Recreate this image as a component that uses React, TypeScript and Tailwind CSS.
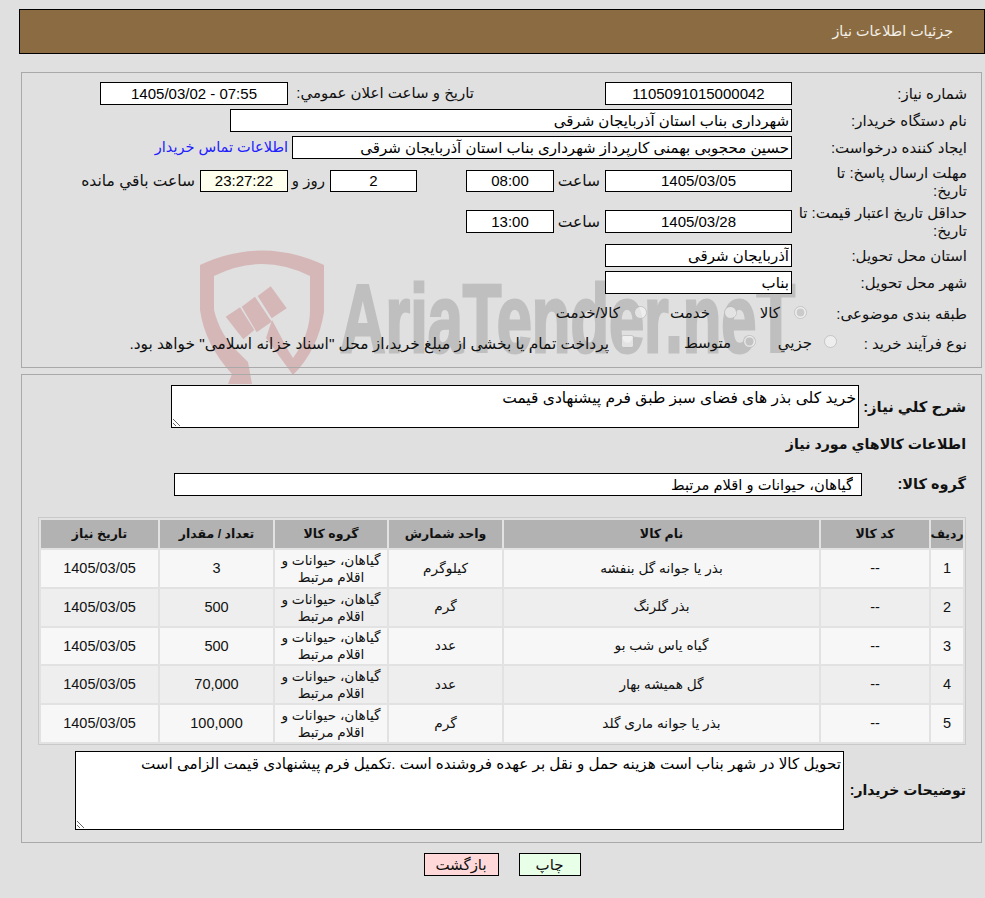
const font = 'font-["Liberation_Sans","DejaVu_Sans",sans-serif]'

const items = [
  { id: '1', name: 'بذر یا جوانه گل بنفشه', unit: 'کیلوگرم', qty: '3', alt: false },
  { id: '2', name: 'بذر گلرنگ', unit: 'گرم', qty: '500', alt: true },
  { id: '3', name: 'گیاه یاس شب بو', unit: 'عدد', qty: '500', alt: false },
  { id: '4', name: 'گل همیشه بهار', unit: 'عدد', qty: '70,000', alt: true },
  { id: '5', name: 'بذر یا جوانه ماری گلد', unit: 'گرم', qty: '100,000', alt: false },
]

const headers = ['ردیف', 'کد کالا', 'نام کالا', 'واحد شمارش', 'گروه کالا', 'تعداد / مقدار', 'تاریخ نیاز']

function Box({ value, className = '' }: { value: string; className?: string }) {
  return (
    <input
      readOnly
      value={value}
      className={`h-[23px] shrink-0 border border-black bg-white px-[2px] text-[15px] text-black outline-none ${className}`}
    />
  )
}

function Label({ children, className = 'w-[175px]' }: { children: React.ReactNode; className?: string }) {
  return <div className={`shrink-0 pt-[1px] text-[15px] leading-[18px] text-[#111] ${className}`}>{children}</div>
}

function Watermark() {
  return (
    <svg className="pointer-events-none absolute left-0 top-0" direction="ltr" width="985" height="898" viewBox="0 0 985 898">
      {/* shield */}
      <path
        d="M200 265 Q262 236 324 265 L324 312 Q318 350 293 375 L266 338 L272 320 L288 350 L293 358 Q310 335 310 310 L310 276 Q262 252 214 276 L214 310 Q220 335 238 352 L248 362 L252 384 L228 384 L232 374 Q205 345 200 310 Z"
        fill="#d6b7b8"
      />
      <polygon points="225.7,316.7 240,307.3 254.3,330 243.3,339.3" fill="#d6b7b8" />
      <polygon points="241.7,306.7 255,296.7 271.7,321.7 256.7,332.3" fill="#d6b7b8" />
      <polygon points="257.7,296 270.7,286.3 286.7,308.3 271.7,318.3" fill="#d6b7b8" />
      <text
        x="340"
        y="352"
        textLength="455"
        lengthAdjust="spacingAndGlyphs"
        fontFamily="Liberation Sans"
        fontWeight="700"
        fontSize="96"
        fill="#bfbfbf"
        stroke="#bfbfbf"
        strokeWidth="3"
      >
        AriaTender.neT
      </text>
    </svg>
  )
}

export default function App() {
  return (
    <div dir="rtl" className={`relative min-h-[898px] bg-[#e0e0e0] pt-[9px] ${font} text-[15px] text-[#111]`}>
      <Watermark />
      <div className="relative z-10">
        <div className="ml-[19px] flex h-[45px] items-center border border-black bg-[#8b6c42] pr-[31px] text-[14.3px] text-[#f4f0e8]">
          جزئیات اطلاعات نیاز
        </div>

        {/* top form */}
        <div className="ml-[21px] mr-[3px] mt-[18px] h-[296px] border border-[#a9a9a9] pr-[14px] pt-[7px]">
          <div className="flex h-[27px] items-center">
            <Label>شماره نیاز:</Label>
            <Box value="1105091015000042" className="w-[187px] text-center" />
            <div className="mr-[131px] w-[186px] shrink-0 whitespace-nowrap">تاریخ و ساعت اعلان عمومي:</div>
            <Box value="07:55 - 1405/03/02" className="w-[188px] text-center" />
          </div>
          <div className="flex h-[27px] items-center">
            <Label>نام دستگاه خریدار:</Label>
            <Box value="شهرداری بناب استان آذربایجان شرقی" className="w-[562px]" />
          </div>
          <div className="flex h-[27px] items-center">
            <Label>ایجاد کننده درخواست:</Label>
            <Box value="حسین محجوبی بهمنی کارپرداز شهرداری بناب استان آذربایجان شرقی" className="w-[500px]" />
            <a className="mr-[4px] whitespace-nowrap text-[14.5px] text-[#2020ff]">اطلاعات تماس خریدار</a>
          </div>
          <div className="flex h-[40px] items-center">
            <Label>
              مهلت ارسال پاسخ: تا
              <br />
              تاریخ:
            </Label>
            <Box value="1405/03/05" className="!h-[22px] w-[187px] text-center" />
            <div className="mx-[5px] w-[41px] shrink-0 whitespace-nowrap text-[15.5px]">ساعت</div>
            <Box value="08:00" className="!h-[22px] w-[88px] text-center" />
            <Box value="2" className="!h-[22px] mr-[49px] w-[87px] text-center" />
            <div className="mx-[5px] w-[28px] shrink-0 whitespace-nowrap">روز و</div>
            <Box value="23:27:22" className="!h-[22px] mr-[4px] w-[88px] !bg-[#ffffee] text-center" />
            <div className="mr-[5px] whitespace-nowrap text-[15.5px]">ساعت باقي مانده</div>
          </div>
          <div className="flex h-[41px] items-center">
            <Label>
              حداقل تاریخ اعتبار قیمت: تا
              <br />
              تاریخ:
            </Label>
            <Box value="1405/03/28" className="w-[187px] text-center" />
            <div className="mx-[5px] w-[41px] shrink-0 whitespace-nowrap text-[15.5px]">ساعت</div>
            <Box value="13:00" className="w-[88px] text-center" />
          </div>
          <div className="flex h-[27px] items-center">
            <Label>استان محل تحویل:</Label>
            <Box value="آذربایجان شرقی" className="w-[187px]" />
          </div>
          <div className="flex h-[27px] items-center">
            <Label>شهر محل تحویل:</Label>
            <Box value="بناب" className="w-[187px]" />
          </div>
          <div className="flex h-[34px] items-center">
            <Label className="w-[160px]">طبقه بندی موضوعی:</Label>
            <div className="flex w-[70px] shrink-0 items-center gap-[14px]">
              <input type="radio" name="cat" disabled defaultChecked className="m-0 -mt-[2px]" />
              <span>کالا</span>
            </div>
            <div className="flex w-[90px] shrink-0 items-center gap-[14px]">
              <input type="radio" name="cat" disabled className="m-0 -mt-[2px]" />
              <span>خدمت</span>
            </div>
            <div className="flex items-center gap-[14px]">
              <input type="radio" name="cat" disabled className="m-0 -mt-[2px]" />
              <span>کالا/خدمت</span>
            </div>
          </div>
          <div className="flex h-[27px] items-center">
            <Label className="w-[130px]">نوع فرآیند خرید :</Label>
            <div className="flex w-[81px] shrink-0 items-center gap-[12px]">
              <input type="radio" name="proc" disabled className="m-0 -mt-[4px]" />
              <span>جزیي</span>
            </div>
            <div className="flex w-[122px] shrink-0 items-center gap-[12px]">
              <input type="radio" name="proc" disabled defaultChecked className="m-0 -mt-[4px]" />
              <span>متوسط</span>
            </div>
            <div className="flex items-center gap-[12px] whitespace-nowrap text-[15.4px]">
              <input type="checkbox" disabled className="m-0 -mt-[4px]" />
              <span>پرداخت تمام یا بخشی از مبلغ خرید،از محل "اسناد خزانه اسلامی" خواهد بود.</span>
            </div>
          </div>
        </div>

        {/* description + items */}
        <div className="ml-[21px] mr-[3px] mt-[6px] h-[469px] border border-[#a9a9a9] pr-[15px] pt-[10px]">
          <div className="flex h-[43px] items-center">
            <div className="w-[107px] shrink-0 whitespace-nowrap pt-[1px] text-[14.8px] font-bold">شرح كلي نياز:</div>
            <textarea
              readOnly
              value="خرید کلی بذر های فضای سبز طبق فرم پیشنهادی قیمت"
              className="h-[43px] w-[688px] border border-black bg-white px-[2px] pt-[3px] text-[15.5px] leading-[18px] text-black outline-none"
            />
          </div>
          <div className="mt-[3px] flex h-[27px] items-center text-[14.2px] font-bold">اطلاعات كالاهاي مورد نياز</div>
          <div className="mt-[15px] flex h-[23px] items-center">
            <div className="w-[104px] shrink-0 text-[14.5px] font-bold">گروه کالا:</div>
            <input
              readOnly
              value="گیاهان، حیوانات و اقلام مرتبط"
              className="h-[23px] w-[688px] border border-black bg-white pr-[8px] text-[14.7px] text-black outline-none"
            />
          </div>

          {/* goods table */}
          <div className="mt-[21px] grid w-[928px] grid-cols-[32px_108px_315px_113px_112px_113px_117px] gap-[2px] border border-[#c9c9c9] bg-[#e2e2e2] p-[2px] text-[13.7px]">
            {headers.map(h => (
              <div key={h} className="flex h-[28px] items-center justify-center whitespace-nowrap bg-[#b2b2b2] pt-[1px] text-[12.5px] font-bold text-[#111]">
                {h}
              </div>
            ))}
            {items.map(row => {
              const bg = row.alt ? 'bg-[#eeeeee]' : 'bg-[#f7f7f7]'
              const cell = `flex h-[36.75px] items-center justify-center pt-[1px] text-center ${bg}`
              return (
                <div key={row.id} className="contents">
                  <div className={`${cell} text-[14.5px]`}>{row.id}</div>
                  <div className={`${cell} text-[14.5px]`}>--</div>
                  <div className={cell}>{row.name}</div>
                  <div className={cell}>{row.unit}</div>
                  <div className={`${cell} px-[6px] leading-[17px]`}>گیاهان، حیوانات و اقلام مرتبط</div>
                  <div className={`${cell} text-[14.5px]`}>{row.qty}</div>
                  <div className={`${cell} text-[14.5px]`}>1405/03/05</div>
                </div>
              )
            })}
          </div>

          <div className="mt-[6px] flex h-[79px] items-center">
            <div className="w-[122px] shrink-0 whitespace-nowrap text-[14px] font-bold">توضیحات خریدار:</div>
            <textarea
              readOnly
              value="تحویل کالا در شهر بناب است هزینه حمل و نقل بر عهده فروشنده است .تکمیل فرم پیشنهادی قیمت الزامی است"
              className="h-[79px] w-[769px] border border-black bg-white px-[2px] pt-[3px] text-[15.2px] leading-[18px] text-black outline-none"
            />
          </div>
        </div>

        <div className="mt-[10px] flex justify-center gap-[20px] pl-[19px]">
          <button className="h-[23px] w-[62px] border border-black bg-[#e8ffe8] text-[15px] text-[#111]">چاپ</button>
          <button className="h-[23px] w-[75px] border border-black bg-[#ffd9d9] text-[15px] text-[#111]">بازگشت</button>
        </div>
      </div>
    </div>
  )
}
